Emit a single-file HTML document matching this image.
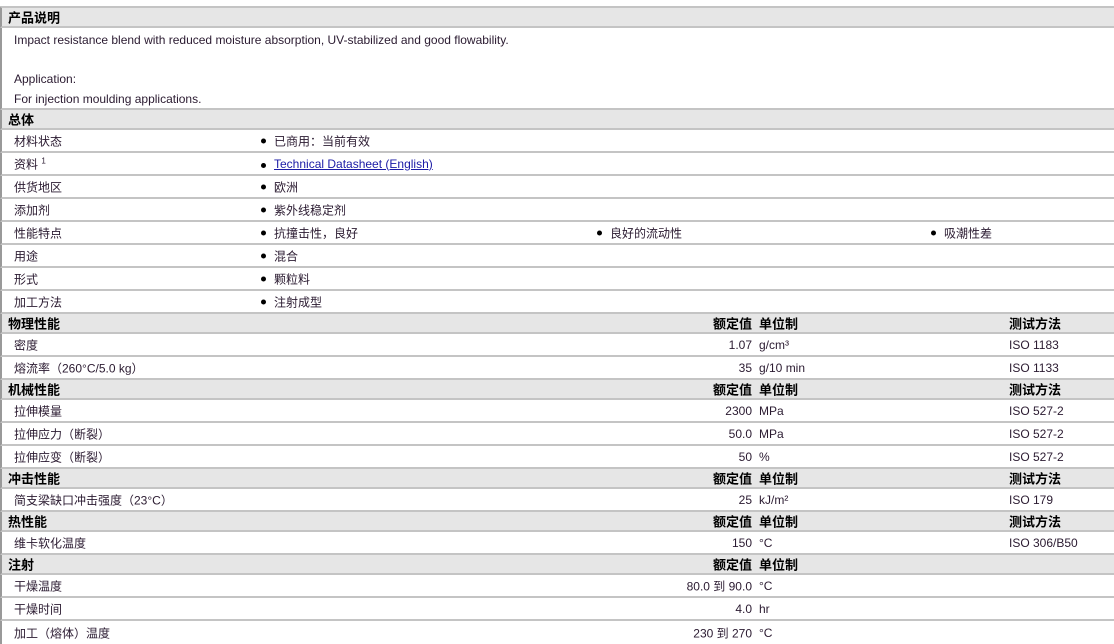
<!DOCTYPE html><html><head><meta charset="utf-8"><style>
body{margin:0;width:1114px;height:644px;overflow:hidden;background:#fff;font-family:"Liberation Sans","Noto Sans CJK SC",sans-serif;font-size:12px;color:#2a1a30;position:relative}
.r{position:absolute;left:0;width:1114px;border-bottom:2px solid #c4c4c4;box-sizing:border-box;border-left:2px solid #999}
.h{background:#e6e6e6;font-weight:bold;font-size:13px;color:#000}
.r span{position:absolute;top:50%;transform:translateY(-50%);white-space:nowrap}
.b::before{content:"";position:absolute;left:-13px;top:6px;width:5px;height:5px;border-radius:50%;background:#000}
.v{right:362px;text-align:right}
a{color:#1a1aa6;text-decoration:underline}
</style></head><body>
<div class="r" style="top:0;height:8px;border-left:none"></div>
<div class="r h" style="top:7px;height:21px;border-top:1px solid #c4c4c4"><span style="left:6px">产品说明</span></div>
<div class="r" style="top:28px;height:82px"><span style="left:12px;top:5px;transform:none">Impact resistance blend with reduced moisture absorption, UV-stabilized and good flowability.</span><span style="left:12px;top:44px;transform:none">Application:</span><span style="left:12px;top:64px;transform:none">For injection moulding applications.</span></div>
<div class="r h" style="top:110px;height:20px"><span style="left:6px">总体</span></div>
<div class="r" style="top:130px;height:23px"><span style="left:12px">材料状态</span><span class="b" style="left:272px">已商用：当前有效</span></div>
<div class="r" style="top:153px;height:23px"><span style="left:12px">资料 <sup style="font-size:8px">1</sup></span><span class="b" style="left:272px"><a>Technical Datasheet (English)</a></span></div>
<div class="r" style="top:176px;height:23px"><span style="left:12px">供货地区</span><span class="b" style="left:272px">欧洲</span></div>
<div class="r" style="top:199px;height:23px"><span style="left:12px">添加剂</span><span class="b" style="left:272px">紫外线稳定剂</span></div>
<div class="r" style="top:222px;height:23px"><span style="left:12px">性能特点</span><span class="b" style="left:272px">抗撞击性，良好</span><span class="b" style="left:608px">良好的流动性</span><span class="b" style="left:942px">吸潮性差</span></div>
<div class="r" style="top:245px;height:23px"><span style="left:12px">用途</span><span class="b" style="left:272px">混合</span></div>
<div class="r" style="top:268px;height:23px"><span style="left:12px">形式</span><span class="b" style="left:272px">颗粒料</span></div>
<div class="r" style="top:291px;height:23px"><span style="left:12px">加工方法</span><span class="b" style="left:272px">注射成型</span></div>
<div class="r h" style="top:314px;height:20px"><span style="left:6px">物理性能</span><span class="v">额定值</span><span style="left:757px">单位制</span><span style="left:1007px">测试方法</span></div>
<div class="r" style="top:334px;height:23px"><span style="left:12px">密度</span><span class="v">1.07</span><span style="left:757px">g/cm³</span><span style="left:1007px">ISO 1183</span></div>
<div class="r" style="top:357px;height:23px"><span style="left:12px">熔流率（260°C/5.0 kg）</span><span class="v">35</span><span style="left:757px">g/10 min</span><span style="left:1007px">ISO 1133</span></div>
<div class="r h" style="top:380px;height:20px"><span style="left:6px">机械性能</span><span class="v">额定值</span><span style="left:757px">单位制</span><span style="left:1007px">测试方法</span></div>
<div class="r" style="top:400px;height:23px"><span style="left:12px">拉伸模量</span><span class="v">2300</span><span style="left:757px">MPa</span><span style="left:1007px">ISO 527-2</span></div>
<div class="r" style="top:423px;height:23px"><span style="left:12px">拉伸应力（断裂）</span><span class="v">50.0</span><span style="left:757px">MPa</span><span style="left:1007px">ISO 527-2</span></div>
<div class="r" style="top:446px;height:23px"><span style="left:12px">拉伸应变（断裂）</span><span class="v">50</span><span style="left:757px">%</span><span style="left:1007px">ISO 527-2</span></div>
<div class="r h" style="top:469px;height:20px"><span style="left:6px">冲击性能</span><span class="v">额定值</span><span style="left:757px">单位制</span><span style="left:1007px">测试方法</span></div>
<div class="r" style="top:489px;height:23px"><span style="left:12px">简支梁缺口冲击强度（23°C）</span><span class="v">25</span><span style="left:757px">kJ/m²</span><span style="left:1007px">ISO 179</span></div>
<div class="r h" style="top:512px;height:20px"><span style="left:6px">热性能</span><span class="v">额定值</span><span style="left:757px">单位制</span><span style="left:1007px">测试方法</span></div>
<div class="r" style="top:532px;height:23px"><span style="left:12px">维卡软化温度</span><span class="v">150</span><span style="left:757px">°C</span><span style="left:1007px">ISO 306/B50</span></div>
<div class="r h" style="top:555px;height:20px"><span style="left:6px">注射</span><span class="v">额定值</span><span style="left:757px">单位制</span></div>
<div class="r" style="top:575px;height:23px"><span style="left:12px">干燥温度</span><span class="v">80.0 到 90.0</span><span style="left:757px">°C</span></div>
<div class="r" style="top:598px;height:23px"><span style="left:12px">干燥时间</span><span class="v">4.0</span><span style="left:757px">hr</span></div>
<div class="r" style="top:621px;height:23px;border-bottom:none"><span style="left:12px">加工（熔体）温度</span><span class="v">230 到 270</span><span style="left:757px">°C</span></div>
</body></html>
